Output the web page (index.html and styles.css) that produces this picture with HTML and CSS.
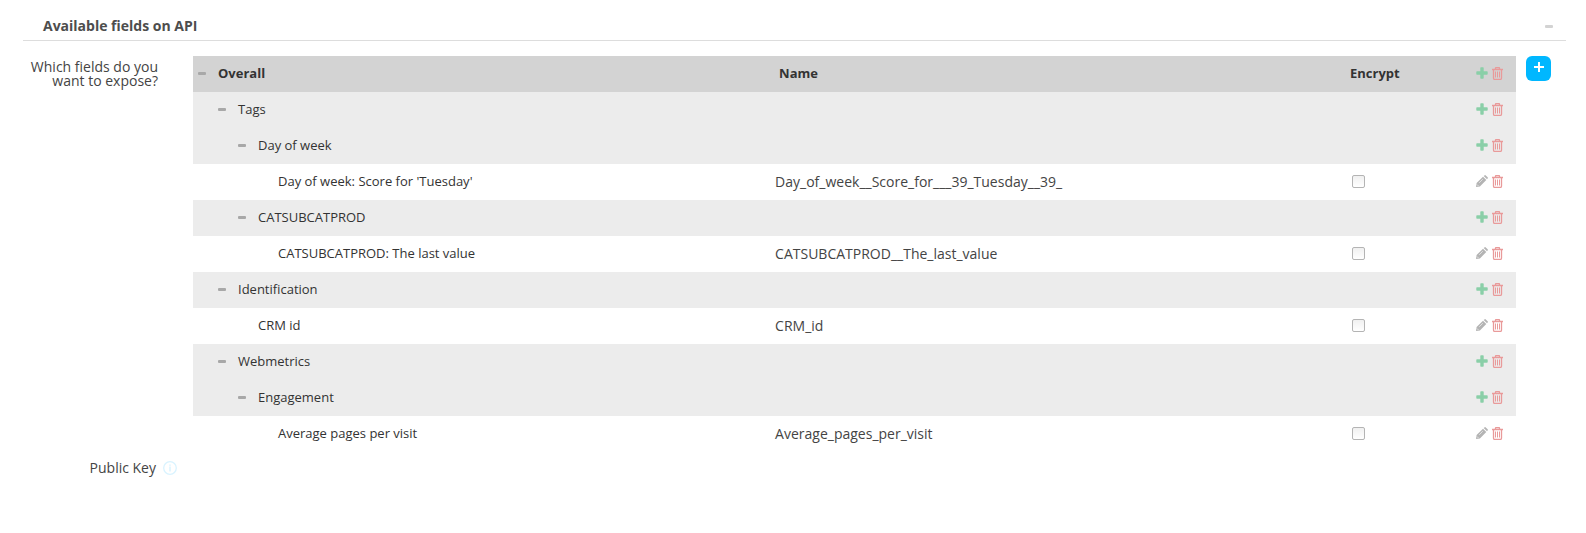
FILE: index.html
```
<!DOCTYPE html>
<html lang="en">
<head>
  <meta charset="UTF-8">
  <meta name="viewport" content="width=device-width, initial-scale=1.0">
  <title>Available fields on API</title>
  <link rel="stylesheet" href="styles.css">
</head>
<body>

  <svg class="sprite" aria-hidden="true">
    <symbol id="plus" viewBox="0 0 12 12">
      <path d="M4.300 1q0-.7.7-.7h2q.7 0 .7.7v3.300H11q.7 0 .7.7v2q0 .7-.7.7H7.700V11q0 .7-.7.7H5q-.7 0-.7-.7V7.700H1q-.7 0-.7-.7V5q0-.7.7-.7h3.300z" fill="currentColor"/>
    </symbol>
    <symbol id="trash" viewBox="0 0 11 13">
      <path d="M0 2.500h11M3.500 2.500V1.300q0-.8.8-.8h2.400q.8 0 .8.800v1.200M1.500 2.500v8.500q0 1.500 1.200 1.500h5.600q1.200 0 1.200-1.500V2.500" fill="none" stroke="currentColor" stroke-width="1.300"/>
      <path d="M3.500 4.500v6M5.500 4.500v6M7.500 4.500v6" fill="none" stroke="currentColor"/>
    </symbol>
    <symbol id="pencil" viewBox="0 0 12 12">
      <path d="M0 12l.6-3.900L7 1.700 10.300 5 3.900 11.400zM7.700 1l.7-.6q.7-.7 1.400 0l1.800 1.800q.7.7 0 1.400l-.6.7z" fill="currentColor"/>
      <path d="M1 9.500L2.500 11M3.200 7.800l3.600-3.600" fill="none" stroke="#fff" stroke-width=".6"/>
    </symbol>
  </svg>

  <section class="panel">
    <header class="panel__header">
      <h1 class="panel__title">Available fields on API</h1>
      <button class="toggle toggle--light" aria-label="Collapse section"></button>
    </header>

    <div class="field">
      <div class="field__label" id="fieldsLabel">Which fields do you want to expose?</div>
      <table class="tree" aria-labelledby="fieldsLabel">
        <thead>
          <tr>
            <th class="tree__label"><div class="node"><button class="toggle" aria-label="Collapse Overall"></button>Overall</div></th>
            <th class="tree__name">Name</th>
            <th class="tree__encrypt">Encrypt</th>
            <th class="tree__actions">
              <div class="actions">
                <button class="btn add" aria-label="Add"><svg><use href="#plus"/></svg></button>
                <button class="btn remove" aria-label="Delete"><svg><use href="#trash"/></svg></button>
              </div>
            </th>
          </tr>
        </thead>
        <tbody></tbody>
      </table>
      <button class="addField" aria-label="Add field"><svg viewBox="0 0 10 10"><path d="M5 0v10M0 5h10" stroke="currentColor" stroke-width="2"/></svg></button>
    </div>

    <div class="field field--key">
      <div class="field__label">Public Key</div>
      <button class="btn info" aria-label="About the public key">
        <svg viewBox="0 0 14 14"><circle cx="7" cy="7" r="6.300" fill="none" stroke="currentColor" stroke-width="1.300"/><path d="M7 3.500v1.200M7 5.500v5" stroke="currentColor" stroke-width="1.500"/></svg>
      </button>
    </div>
  </section>

  <script>
    const rows = [
      { level: 1, label: "Tags" },
      { level: 2, label: "Day of week" },
      { level: 3, label: "Day of week: Score for 'Tuesday'", name: "Day_of_week__Score_for___39_Tuesday__39_" },
      { level: 2, label: "CATSUBCATPROD" },
      { level: 3, label: "CATSUBCATPROD: The last value", name: "CATSUBCATPROD__The_last_value" },
      { level: 1, label: "Identification" },
      { level: 2, label: "CRM id", name: "CRM_id" },
      { level: 1, label: "Webmetrics" },
      { level: 2, label: "Engagement" },
      { level: 3, label: "Average pages per visit", name: "Average_pages_per_visit" }
    ];

    // rows with a name are leaves, the others are groups
    function createRow(row) {
      const leaf = row.name !== undefined;
      return `
        <tr class="${leaf ? 'leaf' : 'group'}">
          <td><div class="node level${row.level}">${leaf ? '' : `<button class="toggle" aria-label="Collapse ${row.label}"></button>`}${row.label}</div></td>
          <td class="name">${leaf ? row.name : ''}</td>
          <td class="encrypt">${leaf ? `<input type="checkbox" class="check" aria-label="Encrypt ${row.name}">` : ''}</td>
          <td>
            <div class="actions">
              ${leaf
                ? '<button class="btn edit" aria-label="Edit"><svg><use href="#pencil"/></svg></button>'
                : '<button class="btn add" aria-label="Add"><svg><use href="#plus"/></svg></button>'}
              <button class="btn remove" aria-label="Delete"><svg><use href="#trash"/></svg></button>
            </div>
          </td>
        </tr>
      `;
    }

    document.querySelector('.tree tbody').innerHTML = rows.map(createRow).join('');
  </script>
</body>
</html>
```
FILE: styles.css
```
* { padding:0; margin:0; box-sizing:border-box; }

:root {
  --color-text: #333333;
  --color-label: #444444;
  --color-title: #4d4d4d;
  --color-line: #dddddd;
  --color-head: #d3d3d3;
  --color-group: #ececec;
  --color-add: #8acfa8;
  --color-remove: #e99a9a;
  --color-blue: #00b7ff;

  --row-height: 36px;
  --indent: 20px;
}

body {
  background-color: #ffffff;
  color: var(--color-text);
  font-family: "Open Sans", "Noto Sans", sans-serif;
  font-size: 14px;
}

button {
  border: none;
  background: none;
  color: inherit;
  cursor: pointer;
}

svg {
  display: block;
}

.sprite {
  display: none;
}

.panel {
  padding: 12px 20px 20px 23px;
}

.panel__header {
  display: flex;
  align-items: center;
  justify-content: space-between;
  height: 29px;
  padding: 0 13px 0 20px;
  border-bottom: 1px solid var(--color-line);
}

.panel__title {
  font-size: 14px;
  font-weight: 700;
  line-height: 20px;
  color: var(--color-title);
}

.toggle {
  width: 8px;
  height: 3px;
  border-radius: 1px;
  background-color: #a8a8a8;
}

.toggle--light {
  background-color: #d3d3d3;
}

.field {
  display: flex;
  align-items: flex-start;
  padding: 15px 15px 0 0;
}

.field__label {
  flex: none;
  width: 135px;
  margin-right: 35px;
  padding-top: 4px;
  line-height: 14px;
  text-align: right;
  color: var(--color-label);
}

.field--key {
  align-items: center;
  padding-top: 7px;
}

.field--key .field__label {
  width: 133px;
  margin-right: 7px;
  padding-top: 0;
  line-height: 18px;
}

/* field tree */
.tree {
  flex: 1;
  table-layout: fixed;
  border-collapse: collapse;
  font-size: 13px;
}

.tree tr {
  height: var(--row-height);
}

.tree th,
.tree td {
  padding-bottom: 2px;
}

.tree th {
  text-align: left;
  font-weight: 700;
}

.tree thead {
  background-color: var(--color-head);
}

.group {
  background-color: var(--color-group);
}

.tree__label {
  width: 44%;
}

.tree .tree__name {
  padding-left: 4px;
}

.tree__encrypt {
  width: 113px;
}

.tree__actions {
  width: 53px;
}

.node {
  display: flex;
  align-items: center;
  padding-left: 25px;
}

.node .toggle {
  margin: 0 12px 0 -20px;
}

.level1 {
  padding-left: calc(25px + var(--indent));
}

.level2 {
  padding-left: calc(25px + var(--indent) * 2);
}

.level3 {
  padding-left: calc(25px + var(--indent) * 3);
}

.name {
  font-size: 14px;
  color: var(--color-label);
}

.encrypt {
  padding-left: 2px;
}

.check {
  display: block;
  appearance: none;
  width: 13px;
  height: 13px;
  border: 1px solid #b4b4b4;
  border-radius: 2px;
  background: linear-gradient(#f0f0f0, #ffffff);
}

.check:checked {
  background: var(--color-blue);
}

.actions {
  display: flex;
  align-items: center;
  justify-content: flex-end;
  gap: 4px;
  padding-right: 13px;
}

.btn svg {
  width: 12px;
  height: 12px;
}

.add {
  color: var(--color-add);
}

.edit {
  color: #b4b4b4;
}

.remove {
  color: var(--color-remove);
}

.btn.remove svg {
  width: 11px;
  height: 13px;
}

.addField {
  flex: none;
  width: 25px;
  height: 25px;
  margin-left: 10px;
  padding-bottom: 3px;
  border-radius: 6px;
  background-color: var(--color-blue);
  color: #ffffff;
}

.addField svg {
  width: 10px;
  height: 10px;
  margin: 0 auto;
}

.info {
  color: #d9f3ff;
}

.btn.info svg {
  width: 14px;
  height: 14px;
}
```
